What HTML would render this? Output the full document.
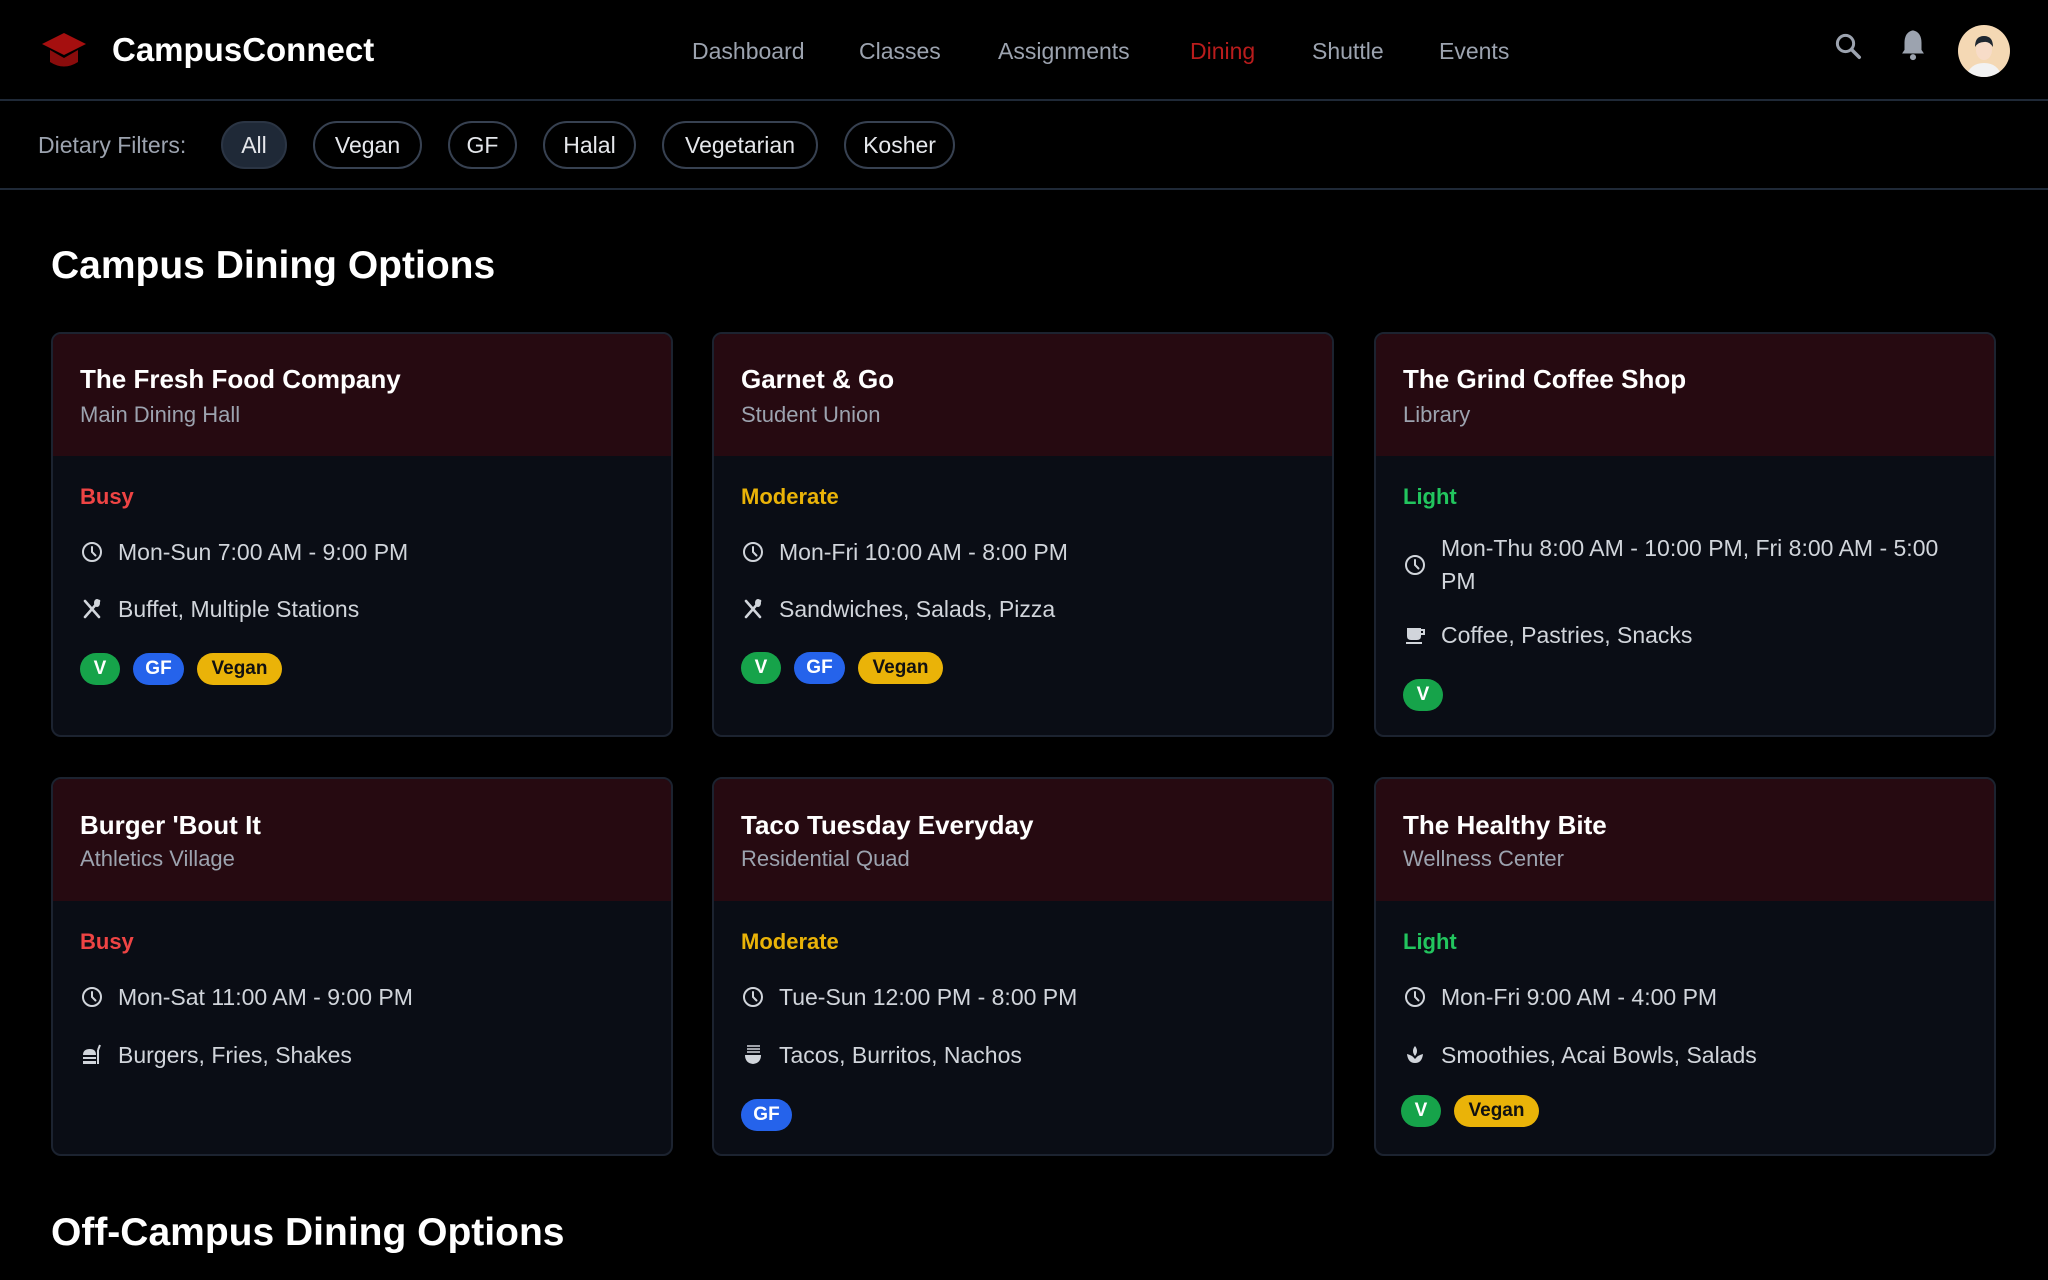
<!DOCTYPE html>
<html><head><meta charset="utf-8"><style>
*{box-sizing:border-box;margin:0;padding:0}
body{width:2048px;height:1280px;background:#000;font-family:"Liberation Sans",sans-serif;color:#e5e7eb;position:relative;overflow:hidden}
.a{position:absolute;white-space:nowrap}
.hdr{position:absolute;left:0;top:0;width:2048px;height:101px;border-bottom:2px solid #1f2937}
.flt{position:absolute;left:0;top:101px;width:2048px;height:89px;border-bottom:2px solid #1f2937}
.nav{font-size:23px;color:#9ca3af;top:35px;line-height:32px}
.pill{position:absolute;top:121px;height:48px;border:2px solid #374151;border-radius:24px;font-size:23px;line-height:44px;text-align:center;color:#e5e7eb}
.card{position:absolute;width:622px;background:#0a0d15;border:2px solid #1c2330;border-radius:10px;overflow:hidden}
.ch{position:absolute;left:0;top:0;right:0;height:122px;background:#260a11}
.card .t{position:absolute;left:27px;font-size:26px;font-weight:bold;color:#fff;line-height:32px;white-space:nowrap}
.card .s{position:absolute;left:27px;font-size:22px;color:#9ca3af;line-height:32px}
.card .st{position:absolute;left:27px;font-size:22px;font-weight:bold;line-height:32px}
.card .l{position:absolute;left:65px;right:24px;font-size:23px;color:#d1d5db;line-height:33px}
.card svg.i{position:absolute;left:27px;width:24px;height:24px}
.bd{position:absolute;height:32px;border-radius:16px;font-size:19px;font-weight:bold;line-height:32px;text-align:center}
.v{background:#16a34a;color:#fff;width:40px}
.gf{background:#2563eb;color:#fff;width:51px}
.vg{background:#eab308;color:#111;width:85px}
h2{position:absolute;left:51px;font-size:39px;font-weight:bold;color:#fff;line-height:48px;white-space:nowrap}
</style></head><body>
<div class="hdr"></div>
<svg class="a" style="left:40px;top:31px" width="48" height="42" viewBox="0 0 48 42"><path d="M24 2 L46 13 L24 24 L2 13Z" fill="#a50f0f"/><path d="M10 19 V31 Q24 40 38 31 V19 L24 27Z" fill="#8a0c0c"/></svg>
<div class="a" style="left:112px;top:30px;font-size:33px;font-weight:bold;color:#fff;line-height:40px">CampusConnect</div>
<div class="a nav" style="left:692px">Dashboard</div>
<div class="a nav" style="left:859px">Classes</div>
<div class="a nav" style="left:998px">Assignments</div>
<div class="a nav" style="left:1190px;color:#b91c1c">Dining</div>
<div class="a nav" style="left:1312px">Shuttle</div>
<div class="a nav" style="left:1439px">Events</div>
<svg class="a" style="left:1833px;top:31px" width="30" height="30" viewBox="0 0 24 24"><circle cx="10" cy="10" r="6.5" fill="none" stroke="#9ca3af" stroke-width="2.4"/><path d="M15 15 L21 21" stroke="#9ca3af" stroke-width="2.8" stroke-linecap="round"/></svg>
<svg class="a" style="left:1898px;top:28px" width="30" height="34" viewBox="0 0 24 28"><path d="M12 2 C7 3 5 7 5 12 V18 L3 21 H21 L19 18 V12 C19 7 17 3 12 2Z" fill="#9ca3af"/><circle cx="12" cy="24" r="2.5" fill="#9ca3af"/></svg>
<svg class="a" style="left:1958px;top:25px" width="52" height="52" viewBox="0 0 52 52"><defs><clipPath id="c"><circle cx="26" cy="26" r="26"/></clipPath></defs><g clip-path="url(#c)"><rect width="52" height="52" fill="#f4d8b4"/><path d="M8 52 Q12 38 26 38 Q40 38 44 52Z" fill="#f2f2f2"/><ellipse cx="26" cy="25" rx="8" ry="10" fill="#f7dcc8"/><path d="M17 22 Q17 11 26 11 Q35 11 35 22 Q31 16 26 17 Q20 17 17 22Z" fill="#1f2730"/></g></svg>

<div class="flt"></div>
<div class="a" style="left:38px;top:129px;font-size:23px;color:#9ca3af;line-height:32px">Dietary Filters:</div>
<div class="pill" style="left:221px;width:66px;background:#1f2937;border-color:#2b3544">All</div>
<div class="pill" style="left:313px;width:109px">Vegan</div>
<div class="pill" style="left:448px;width:69px">GF</div>
<div class="pill" style="left:543px;width:93px">Halal</div>
<div class="pill" style="left:662px;width:156px">Vegetarian</div>
<div class="pill" style="left:844px;width:111px">Kosher</div>

<h2 style="top:242px">Campus Dining Options</h2>

<!-- icon defs -->
<svg width="0" height="0" style="position:absolute"><defs>
<g id="clk"><circle cx="12" cy="12" r="9" fill="none" stroke="#d1d5db" stroke-width="2"/><path d="M12 7 V12 L15.5 15.5" fill="none" stroke="#d1d5db" stroke-width="2" stroke-linecap="round"/></g>
<g id="fk"><path d="M5 4 L19 20 M19 4 L5 20" stroke="#d1d5db" stroke-width="2.6" stroke-linecap="round"/><ellipse cx="17" cy="6" rx="3" ry="4" fill="#d1d5db"/></g>
<g id="cup"><path d="M4 5 H18 V13 Q18 17 14 17 H8 Q4 17 4 13Z" fill="#d1d5db"/><path d="M18 7 H21 V11 H18" fill="none" stroke="#d1d5db" stroke-width="2"/><rect x="3" y="19" width="16" height="2" fill="#d1d5db"/></g>
<g id="bur"><path d="M3 12 Q3 6 10 6 Q16 6 16 12Z" fill="#d1d5db"/><rect x="3" y="14" width="13" height="2" fill="#d1d5db"/><rect x="3" y="18" width="13" height="3" fill="#d1d5db"/><path d="M18 21 V7 M18 7 L20 2" stroke="#d1d5db" stroke-width="2"/></g>
<g id="bowl"><path d="M4 12 H20 Q20 20 12 21 Q4 20 4 12Z" fill="#d1d5db"/><path d="M6 3 H19 M6 6 H19 M6 9 H19" stroke="#d1d5db" stroke-width="1.6"/></g>
<g id="leaf"><path d="M12 3 Q8 8 12 13 Q16 8 12 3Z M4 11 Q5 20 12 20 Q19 20 20 11 Q15 12 12 16 Q9 12 4 11Z" fill="#d1d5db"/></g>
</defs></svg>

<!-- Card 1 -->
<div class="card" style="left:51px;top:332px;height:405px"><div class="ch"></div>
<div class="t" style="top:29px">The Fresh Food Company</div><div class="s" style="top:65px">Main Dining Hall</div>
<div class="st" style="top:147px;color:#ef4444">Busy</div>
<svg class="i" viewBox="0 0 24 24" style="top:206px"><use href="#clk"/></svg><div class="l" style="top:202px">Mon-Sun 7:00 AM - 9:00 PM</div>
<svg class="i" viewBox="0 0 24 24" style="top:263px"><use href="#fk"/></svg><div class="l" style="top:259px">Buffet, Multiple Stations</div>
<div class="bd v" style="left:27px;top:319px">V</div><div class="bd gf" style="left:80px;top:319px">GF</div><div class="bd vg" style="left:144px;top:319px">Vegan</div>
</div>
<!-- Card 2 -->
<div class="card" style="left:712px;top:332px;height:405px"><div class="ch"></div>
<div class="t" style="top:29px">Garnet &amp; Go</div><div class="s" style="top:65px">Student Union</div>
<div class="st" style="top:147px;color:#eab308">Moderate</div>
<svg class="i" viewBox="0 0 24 24" style="top:206px"><use href="#clk"/></svg><div class="l" style="top:202px">Mon-Fri 10:00 AM - 8:00 PM</div>
<svg class="i" viewBox="0 0 24 24" style="top:263px"><use href="#fk"/></svg><div class="l" style="top:259px">Sandwiches, Salads, Pizza</div>
<div class="bd v" style="left:27px;top:318px">V</div><div class="bd gf" style="left:80px;top:318px">GF</div><div class="bd vg" style="left:144px;top:318px">Vegan</div>
</div>
<!-- Card 3 -->
<div class="card" style="left:1374px;top:332px;height:405px"><div class="ch"></div>
<div class="t" style="top:29px">The Grind Coffee Shop</div><div class="s" style="top:65px">Library</div>
<div class="st" style="top:147px;color:#22c55e">Light</div>
<svg class="i" viewBox="0 0 24 24" style="top:219px"><use href="#clk"/></svg><div class="l" style="top:198px;white-space:normal">Mon-Thu 8:00 AM - 10:00 PM, Fri 8:00 AM - 5:00 PM</div>
<svg class="i" viewBox="0 0 24 24" style="top:289px"><use href="#cup"/></svg><div class="l" style="top:285px">Coffee, Pastries, Snacks</div>
<div class="bd v" style="left:27px;top:345px">V</div>
</div>
<!-- Row 2 -->
<div class="card" style="left:51px;top:777px;height:379px"><div class="ch"></div>
<div class="t" style="top:30px">Burger 'Bout It</div><div class="s" style="top:64px">Athletics Village</div>
<div class="st" style="top:147px;color:#ef4444">Busy</div>
<svg class="i" viewBox="0 0 24 24" style="top:206px"><use href="#clk"/></svg><div class="l" style="top:202px">Mon-Sat 11:00 AM - 9:00 PM</div>
<svg class="i" viewBox="0 0 24 24" style="top:264px"><use href="#bur"/></svg><div class="l" style="top:260px">Burgers, Fries, Shakes</div>
</div>
<div class="card" style="left:712px;top:777px;height:379px"><div class="ch"></div>
<div class="t" style="top:30px">Taco Tuesday Everyday</div><div class="s" style="top:64px">Residential Quad</div>
<div class="st" style="top:147px;color:#eab308">Moderate</div>
<svg class="i" viewBox="0 0 24 24" style="top:206px"><use href="#clk"/></svg><div class="l" style="top:202px">Tue-Sun 12:00 PM - 8:00 PM</div>
<svg class="i" viewBox="0 0 24 24" style="top:264px"><use href="#bowl"/></svg><div class="l" style="top:260px">Tacos, Burritos, Nachos</div>
<div class="bd gf" style="left:27px;top:320px">GF</div>
</div>
<div class="card" style="left:1374px;top:777px;height:379px"><div class="ch"></div>
<div class="t" style="top:30px">The Healthy Bite</div><div class="s" style="top:64px">Wellness Center</div>
<div class="st" style="top:147px;color:#22c55e">Light</div>
<svg class="i" viewBox="0 0 24 24" style="top:206px"><use href="#clk"/></svg><div class="l" style="top:202px">Mon-Fri 9:00 AM - 4:00 PM</div>
<svg class="i" viewBox="0 0 24 24" style="top:264px"><use href="#leaf"/></svg><div class="l" style="top:260px">Smoothies, Acai Bowls, Salads</div>
<div class="bd v" style="left:25px;top:316px">V</div><div class="bd vg" style="left:78px;top:316px">Vegan</div>
</div>

<h2 style="top:1209px">Off-Campus Dining Options</h2>
</body></html>
